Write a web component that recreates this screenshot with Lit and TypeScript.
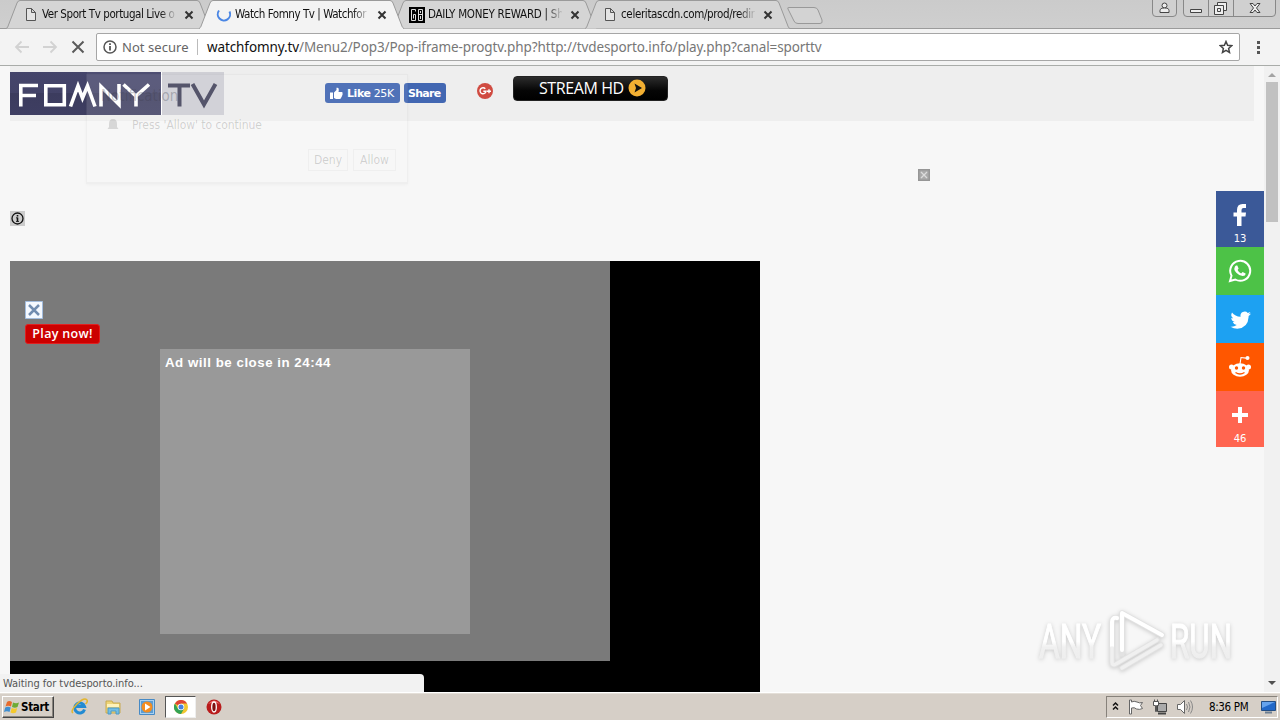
import { LitElement, html, css, svg } from "lit";
import { customElement, property } from "lit/decorators.js";

const close = html`<svg class="x" width="10" height="10" viewBox="0 0 10 10"><path d="M1.5 1.5l7 7M8.5 1.5l-7 7" stroke="#333" stroke-width="2" fill="none"/></svg>`;
const doc = html`<svg width="12" height="15" viewBox="0 0 12 15"><path d="M1.500 1.500h5l4 4v8h-9zM6.500 1.500v4h4" fill="#e4e4e4" stroke="#555"/></svg>`;
const spinner = html`<svg width="16" height="16" viewBox="0 0 16 16"><path d="M3 3.500A6.200 6.200 0 1 0 13.500 4.500" fill="none" stroke="#4a86e4" stroke-width="2"/></svg>`;
const six8 = html`<svg width="16" height="16" viewBox="0 0 16 16"><path d="M0 0h16v16H0z"/><path d="M6.500 4.500v-2h-4v11h4v-6h-2v4M9.500 2.500h4v11h-4zM9.500 7.500h4M11.500 4v2M11.500 9v3" fill="none" stroke="#ddd"/></svg>`;

@customElement("browser-tab")
class BrowserTab extends LitElement {
  @property() label = "";
  @property({ type: Boolean, reflect: true }) active = false;
  @property({ attribute: false }) icon: unknown = null;
  static styles = css`
    :host { display: grid; width: 205px; height: 29px; margin-right: -12px; flex: none; position: relative; }
    :host([active]) { z-index: 2; }
    .shape, .row { grid-area: 1 / 1; }
    .row { display: flex; align-items: center; height: 28px; padding-left: 15px; font: 11.5px "DejaVu Sans Condensed", "DejaVu Sans", sans-serif; z-index: 1; color: #111; }
    .icon { width: 20px; display: flex; justify-content: center; padding-top: 1px; margin-right: 1px; }
    .title { width: 134px; overflow: hidden; white-space: nowrap; letter-spacing: var(--ls, -0.3px); -webkit-mask-image: linear-gradient(90deg, #000 88%, transparent 101%); }
    .x { margin-left: 8px; margin-top: 2px; }
  `;
  render() {
    return html`<svg class="shape" width="205" height="29"><path d="M0 28.500L1.500 27.500L11 3Q12 .5 14 .5H191Q193 .5 194 3L203.500 27.500L205 28.500" fill=${this.active ? "#f3f3f3" : "#d5d5d5"} stroke="#9a9a9a"/>${this.active ? svg`<path d="M1 28.500H204" stroke="#f3f3f3" stroke-width="1.500"/>` : ""}</svg>
      <div class="row"><span class="icon">${this.icon}</span><span class="title">${this.label}</span>${close}</div>`;
  }
}

@customElement("app-root")
class AppRoot extends LitElement {
  static styles = css`
    * { box-sizing: border-box; }
    :host { display: flex; flex-direction: column; width: 1280px; height: 720px; overflow: hidden; position: relative; background: #f7f7f7; font-family: "DejaVu Sans Condensed", "DejaVu Sans", sans-serif; }
    svg { display: block; flex: none; }
    .strip { display: flex; height: 29px; flex: none; background: linear-gradient(#cbcbcb, #cfcfcf); border-bottom: 1px solid #9b9b9b; padding-left: 6px; }
    .t1 { --ls: -0.43px; } .t2 { --ls: -0.45px; } .t3 { --ls: -0.26px; } .t4 { --ls: -0.34px; }
    .newtab { margin-left: 9px; }
    .win { margin-left: auto; }
    .toolbar { display: flex; align-items: center; height: 37px; flex: none; background: #f3f3f3; border-bottom: 1px solid #a9aca9; padding-left: 12px; }
    .nav { display: flex; gap: 8px; }
    .url { display: flex; align-items: center; width: 1144px; height: 28px; margin-left: 8px; background: #fff; border: 1px solid #a6a6a6; border-radius: 2px; padding: 0 6px; font: 14px "Noto Sans", sans-serif; color: #777; white-space: nowrap; }
    .secure { margin-left: 5px; width: 75px; font-size: 13px; color: #666; letter-spacing: 0.05px; }
    .addr { border-left: 1px solid #bbb; padding-left: 9px; height: 16px; line-height: 16px; letter-spacing: -0.105px; flex: 1; font-size: 13.5px; }
    .addr b { font-weight: 400; color: #111; }
    .dots { margin-left: 16px; }
    .body { display: flex; height: 626px; flex: none; }
    .page { width: 1264px; padding: 0 10px; display: flex; flex-direction: column; }
    .head { height: 55px; background: #eee; display: flex; align-items: flex-start; flex: none; }
    .logo { margin-top: 6px; }
    .fb { display: flex; align-items: center; gap: 4px; margin-top: 17px; height: 20px; border-radius: 3px; background: #4267b2; color: #fff; font: 11px "DejaVu Sans", sans-serif; letter-spacing: -0.3px; padding-left: 5px; white-space: nowrap; }
    .fb b { font-size: 11px; }
    .like { width: 75px; margin-left: 101px; letter-spacing: -0.4px; }
    .share { width: 42px; margin-left: 4px; padding-left: 4px; letter-spacing: -0.7px; }
    .gp { margin: 17px 0 0 31px; }
    .stream { display: flex; align-items: center; gap: 4px; margin: 10px 0 0 20px; width: 155px; height: 25px; border-radius: 4px; background: linear-gradient(#2c2c2c, #050505 60%, #000); border: 1px solid #222; color: #fff; font: 16px/20px "Open Sans", sans-serif; padding: 0 0 1px 25px; letter-spacing: -0.4px; white-space: nowrap; }
    .adx { margin: 48px 0 0 908px; }
    .info { margin-top: 30px; }
    .player { margin-top: 35px; width: 750px; flex: 1; background: #000; }
    .ad { width: 600px; height: 400px; background: #7a7a7a; padding: 40px 15px 0; }
    .play { margin-top: 5px; width: 75px; height: 20px; background: #c00; border: 1px solid #e02020; border-radius: 3px; color: #fff; font: 600 12.5px/18px "Open Sans", sans-serif; letter-spacing: 0.3px; text-align: center; white-space: nowrap; }
    .inner { margin: 5px 0 0 135px; width: 310px; height: 285px; background: #999; color: #fff; font: bold 13.3px/16px "Liberation Sans", sans-serif; letter-spacing: 0.52px; padding: 6px 5px; }
    .scroll { width: 16px; background: #f1f1f1; display: flex; flex-direction: column; align-items: center; }
    .thumb { width: 12px; height: 140px; background: #c1c1c1; }
    .down { margin-top: auto; }
    .ghost { position: absolute; left: 86px; top: 74px; width: 322px; height: 110px; border: 1px solid rgba(0,0,0,.03); border-bottom-width: 2px; box-shadow: 0 1px 3px rgba(0,0,0,.03); background: rgba(255,255,255,.08); color: rgba(0,0,0,.17); font-size: 12px; display: flex; flex-direction: column; }
    .ghost .g1 { font-size: 15px; margin: 12px 0 0 14px; line-height: 18px; color: rgba(60,60,75,.3); }
    .g2 { display: flex; gap: 13px; margin: 13px 0 0 20px; line-height: 15px; height: 15px; letter-spacing: -0.05px; }
    .g3 { display: flex; gap: 5px; margin: 16px 11px 0 auto; line-height: 20px; }
    .g3 span { width: 43px; height: 22px; border: 1px solid rgba(0,0,0,.03); text-align: center; }
    .g3 span:first-child { width: 40px; }
    .social { position: absolute; left: 1216px; top: 191px; width: 48px; display: flex; flex-direction: column; color: #fff; font: 10px/12px "DejaVu Sans", sans-serif; text-align: center; }
    .cell { height: 48px; display: flex; flex-direction: column; align-items: center; padding-top: 12px; }
    .cell.tall { height: 56px; }
    .cell span { margin-top: 6px; }
    .f { background: #3b5998; } .w { background: #4dc247; } .t { background: #1da1f2; } .r { background: #ff5700; } .p { background: #ff6550; }
    .status { position: absolute; left: 0; top: 674px; width: 424px; height: 18px; background: #f2f2f2; border-radius: 0 4px 0 0; color: #555; font-size: 11px; line-height: 20px; padding-left: 3px; letter-spacing: -0.05px; }
    .mark { position: absolute; left: 1031px; top: 602px; filter: drop-shadow(0 1px 2px rgba(0,0,0,.18)); overflow: visible; }
    .task { display: flex; align-items: center; height: 28px; background: #d6cfc7; border-top: 1px solid #fff; box-shadow: inset 0 1px #e4dfd8; padding-left: 2px; flex: none; }
    .start { display: flex; align-items: center; gap: 1px; width: 52px; height: 22px; margin-top: 1px; border: 1px solid; border-color: #fff #444 #444 #fff; box-shadow: inset -1px -1px #8a857e; font: bold 11.5px "DejaVu Sans Condensed", "DejaVu Sans", sans-serif; letter-spacing: -0.3px; color: #000; padding-left: 1px; white-space: nowrap; }
    .quick { display: flex; align-items: center; margin-left: 17px; }
    .chrome { width: 31px; height: 22px; margin: 0 10px 0 10px; background: #fff; border: 1px solid; border-color: #555 #eee #eee #555; display: grid; place-items: center; }
    .tray { display: flex; align-items: center; width: 172px; height: 22px; margin: 1px 2px 0 auto; border: 1px solid; border-color: #87827b #fff #fff #87827b; padding-left: 5px; color: #000; }
    .clock { font-size: 11.5px; letter-spacing: -0.35px; width: 48px; white-space: nowrap; margin: 0 5px 0 13px; }
    .q2 { margin-left: 17px; } .q3 { margin-left: 18px; }
  `;
  render() {
    return html`
      <div class="strip">
        <browser-tab class="t1" label="Ver Sport Tv portugal Live o" .icon=${doc}></browser-tab>
        <browser-tab class="t2" active label="Watch Fomny Tv | Watchfor" .icon=${spinner}></browser-tab>
        <browser-tab class="t3" label="DAILY MONEY REWARD | Sh" .icon=${six8}></browser-tab>
        <browser-tab class="t4" label="celeritascdn.com/prod/redire" .icon=${doc}></browser-tab>
        <svg class="newtab" width="40" height="29"><path d="M2 7.500H27Q30 7.500 31 10L35 20Q36 23.500 33 23.500H11Q8 23.500 7 21L1 9Q0 7.500 2 7.500Z" fill="#d3d3d3" stroke="#999"/></svg>
        <svg class="win" width="132" height="18" viewBox="0 0 132 18"><g fill="#d0d0d0" stroke="#888"><path d="M4.500 0V13Q4.500 16.500 8 16.500H25Q28.500 16.500 28.500 13V0M35.500 0V13Q35.500 16.500 39 16.500H124Q127.500 16.500 127.500 13V0M60.500 0V16M85.500 0V16"/></g>
          <g fill="#eee" stroke="#444"><circle cx="16.500" cy="5.500" r="2.500"/><path d="M12 12.500V10.500Q12 8 16.500 8T21 10.500V12.500ZM42.500 9.500h11v3h-11z"/><path d="M69.500 2.500h9v8h-9z"/><path d="M66.500 5.500h9v9h-9zM69.500 8.500h3v3h-3z"/><path d="M102 3.500h3l2 2.500 2-2.500h3l-3.500 4.500 3.500 4.500h-3l-2-2.500-2 2.500h-3l3.500-4.500z"/></g></svg>
      </div>
      <div class="toolbar">
        <div class="nav">
          <svg width="20" height="20" viewBox="0 0 20 20"><path d="M17 10H4M9.500 4.500L4 10l5.500 5.500" fill="none" stroke="#d2d2d2" stroke-width="1.800"/></svg>
          <svg width="20" height="20" viewBox="0 0 20 20"><path d="M3 10h13M10.500 4.500L16 10l-5.500 5.500" fill="none" stroke="#d2d2d2" stroke-width="1.800"/></svg>
          <svg width="20" height="20" viewBox="0 0 20 20"><path d="M4.500 4.500l11 11m0-11l-11 11" stroke="#5a5a5a" stroke-width="2"/></svg>
        </div>
        <div class="url">
          <svg width="14" height="14" viewBox="0 0 14 14"><circle cx="7" cy="7" r="6" fill="none" stroke="#555" stroke-width="1.500"/><path d="M7 6v4.500M7 3.300v1.700" stroke="#555" stroke-width="1.800"/></svg>
          <span class="secure">Not secure</span>
          <span class="addr"><b>watchfomny.tv</b>/Menu2/Pop3/Pop-iframe-progtv.php?http://tvdesporto.info/play.php?canal=sporttv</span>
          <svg width="14" height="14" viewBox="0 0 14 14"><path d="M7 1.500l1.600 3.800 4 .4-3 2.700.9 4L7 10.300l-3.500 2.100.9-4-3-2.700 4-.4z" fill="none" stroke="#444" stroke-width="1.500"/></svg>
        </div>
        <svg class="dots" width="5" height="14"><path d="M1 1h3v3H1zM1 6h3v3H1zM1 11h3v3H1z" fill="#555"/></svg>
      </div>
      <div class="body">
        <div class="page">
          <div class="head">
            <svg class="logo" width="214" height="43" viewBox="0 0 214 43"><defs><linearGradient id="lg" x2="0" y2="1"><stop stop-color="#45456b"/><stop offset=".5" stop-color="#434368"/><stop offset=".5" stop-color="#3c3c5e"/><stop offset="1" stop-color="#3e3e62"/></linearGradient></defs>
              <path d="M0 0h151v43H0z" fill="url(#lg)"/><path d="M77 0h74v43H77z" fill="#fff" opacity=".06"/><path d="M151 0h1v43h-1z" fill="#fff"/><path d="M152 0h62v43h-62z" fill="#cfcfd5"/>
              <path d="M10.800 34.500V13.500H28M10.800 23.500H26M35.800 13.800h18.500v19h-18.500zM60.500 34.500L68 14l4.500 12L77.500 14 85 34.500M91 34.500V14.500L109 32.500V12M113.500 12.500l12.500 11.500L139 12.500M126 23v11.500" fill="none" stroke="#fff" stroke-width="3.600"/>
              <path d="M158 13.500h22M169.500 13.500V34.500M182.500 12l11.500 20.500L205.500 12" fill="none" stroke="#47475f" stroke-width="4"/></svg>
            <div class="fb like"><svg width="13" height="13" viewBox="0 0 13 13"><path d="M0 5.500h3V12H0zM4 5.500L6.500 3V.8Q9 0 8.800 3L8.500 5H12q1 .5.500 1.500.5 1-.3 1.600.2 1-.5 1.500 0 1-.700 1.200Q11 12 9.500 12H6L4 11z" fill="#fff"/></svg><span><b>Like</b> 25K</span></div>
            <div class="fb share"><b>Share</b></div>
            <svg class="gp" width="16" height="16" viewBox="0 0 16 16"><circle cx="8" cy="8" r="8" fill="#d04b41"/><path d="M8.300 5.800A3 3 0 1 0 9 8.300H6.300M12 6.200v4M10 8.200h4" fill="none" stroke="#fff" stroke-width="1.400"/></svg>
            <div class="stream">STREAM HD<svg width="18" height="18" viewBox="0 0 18 18"><circle cx="9" cy="9" r="8.500" fill="#f2af32"/><path d="M6.500 4.500L14 9l-7.500 4.500L8 9z" fill="#111"/></svg></div>
          </div>
          <svg class="adx" width="12" height="12" viewBox="0 0 12 12"><path d="M0 0h12v12H0z" fill="#969696"/><path d="M1.500 1.500h9v9h-9z" fill="#aaa"/><path d="M3 3l6 6M9 3L3 9" stroke="#dcdcdc" stroke-width="1.300"/></svg>
          <svg class="info" width="15" height="15" viewBox="0 0 15 15"><path d="M0 0h15v15H0z" fill="#ccc"/><circle cx="7.500" cy="7.500" r="5.500" fill="none" stroke="#111" stroke-width="1.300"/><path d="M7.500 6.500V10.500M7.500 4v1.500" stroke="#111" stroke-width="1.600"/><path d="M6 6.800h1.500M6 10.500h3" stroke="#111" stroke-width=".8"/></svg>
          <div class="player"><div class="ad">
            <svg width="18" height="18" viewBox="0 0 18 18"><path d="M.5.5h17v17H.5z" fill="#f5f9ff" stroke="#a3bdde"/><path d="M4 4l10 10M14 4L4 14" stroke="#728db0" stroke-width="2.500"/></svg>
            <div class="play">Play now!</div>
            <div class="inner">Ad will be close in 24:44</div>
          </div></div>
        </div>
        <div class="scroll"><svg width="16" height="16"><path d="M4 11l4-4 4 4z" fill="#a3a3a3"/></svg><div class="thumb"></div><svg class="down" width="16" height="16"><path d="M4 5h8l-4 4z" fill="#505050"/></svg></div>
      </div>
      <div class="task">
        <div class="start"><svg width="16" height="16" viewBox="0 0 16 16"><path d="M3 3Q5 1 8 3L7 7.500Q4 6 1.500 7.500z" fill="#e66a2c"/><path d="M9 3.500q3 1.500 6 0L13.500 8Q11 9.500 8 8z" fill="#6eab35"/><path d="M1.200 8.500Q4 7 6.700 8.500L5.500 13Q3 11.500 0 13z" fill="#3f8ed0"/><path d="M7.700 9q3 1.500 5.500 0L12 13.500q-3 1.500-5.500 0z" fill="#f5c92c"/></svg>Start</div>
        <div class="quick">
          <svg width="17" height="17" viewBox="0 0 17 17"><path d="M13.500 11.500A5 5 0 1 1 13.500 8.500H5" fill="none" stroke="#238bd2" stroke-width="3"/><path d="M2 15Q-1 13 6 6T16 2Q17 4 14.500 6" fill="none" stroke="#e4b62f" stroke-width="1.500"/></svg>
          <svg class="q2" width="16" height="16" viewBox="0 0 16 16"><path d="M1 2h6l1 2h7v10H1z" fill="#eed477" stroke="#c8aa50"/><path d="M2 5h12v3H2z" fill="#fff2ba"/><path d="M3 15V9h11v6h-3v-3H6v3z" fill="#72bde5" stroke="#4b9ac8"/></svg>
          <svg class="q3" width="16" height="16" viewBox="0 0 16 16"><path d="M.5.5h15v15H.5z" fill="#a8d0f0" stroke="#478ac5"/><path d="M2 2h12v12H2z" fill="#5b9dd4"/><circle cx="8" cy="8" r="5.500" fill="#f38d20"/><path d="M6 4.500L11.500 8 6 11.500z" fill="#fff"/></svg>
          <div class="chrome"><svg width="14" height="14" viewBox="0 0 14 14"><circle cx="7" cy="7" r="7" fill="#f1c630"/><path d="M7 7L.9 3.500A7 7 0 0 1 13.100 3.500H7z" fill="#df4434"/><path d="M.9 3.500A7 7 0 0 0 7 14L10 8.700 7 7 4 8.700z" fill="#33a355"/><circle cx="7" cy="7" r="3.300" fill="#fff"/><circle cx="7" cy="7" r="2.500" fill="#4580df"/></svg></div>
          <svg width="16" height="16" viewBox="0 0 16 16"><circle cx="8" cy="8" r="7.500" fill="#b91c1c"/><path d="M2 5Q8-2 14 5 8 2 2 5" fill="#e66"/><ellipse cx="8" cy="8" rx="2.300" ry="5" fill="#7e0f0f" stroke="#fff" stroke-width="1.300"/></svg>
        </div>
        <div class="tray">
          <svg width="84" height="20" viewBox="0 0 84 20"><path d="M1 8.500l2.500-2.500L6 8.500M1 12.500l2.500-2.500L6 12.500" fill="none" stroke="#111" stroke-width="1.500"/><path d="M17.500 3v14h2v-6q3-1 5 1 3 1 6-.500l-2-3 2-3q-3 1-5.500-.500-3-1.500-5.500 0V3z" fill="#fff" stroke="#666"/><path d="M45.500 6.500h9v8h-9z" fill="#aaa" stroke="#444"/><path d="M46 16.500h8" stroke="#444" stroke-width="2"/><path d="M41.500 4.500h5v4h-2v6h-1v-6h-2zM42.500 2.500v2M45.500 2.500v2" fill="#fff" stroke="#555"/><path d="M65.500 7.500h3l4-4v13l-4-4h-3z" fill="#fff" stroke="#666"/><path d="M74.500 7q2 3 0 6M76.500 5q3 5 0 10M78.500 3.500q4 6.500 0 13" fill="none" stroke="#888"/></svg>
          <span class="clock">8:36 PM</span>
          <svg width="17" height="16" viewBox="0 0 17 16"><path d="M1.500 2.500h14v9h-14z" fill="#2268c8" stroke="#244e84"/><path d="M2 3h13L2 9z" fill="#66a3ed"/><path d="M5 13.500h7" stroke="#6c7e92" stroke-width="2"/></svg>
        </div>
      </div>
      <div class="ghost"><div class="g1">Notification</div><div class="g2"><svg width="12" height="13"><path d="M2 9V6Q2 1 6 1t4 5v3l1.500 2h-11zM4 12h4" fill="rgba(0,0,0,.13)"/></svg>Press 'Allow' to continue</div><div class="g3"><span>Deny</span><span>Allow</span></div></div>
      <div class="social">
        <div class="cell tall f"><svg width="24" height="24" viewBox="0 0 24 24"><path d="M9 23V13.500H5.500V9.500H9V7q0-6 5.500-6H18v4h-2.500Q13.500 5 13.500 7v2.500H18l-.5 4h-4V23z" fill="#fff"/></svg><span>13</span></div>
        <div class="cell w"><svg width="24" height="24" viewBox="0 0 24 24"><path d="M2 22l1.500-5.300A10 10 0 1 1 7.300 20.500z" fill="none" stroke="#fff" stroke-width="2"/><path d="M8 6.500l1.300 0 1.300 3-1 1.500q1 2.200 3.500 3.500l1.500-1.500 3 1.500q0 2.500-3 2.500-3 0-6-3T6.500 9q.2-1.600 1.500-2.500z" fill="#fff"/></svg></div>
        <div class="cell t"><svg width="24" height="24" viewBox="0 0 24 24"><path d="M23 5.500q-1 .5-2.400.7 1.300-.8 1.800-2.200-1.200.7-2.600 1a4.200 4.200 0 0 0-7.200 3.800Q7 8.500 4 4.500q-2 3.500 1.200 5.800-1 0-1.900-.6 0 3.300 3.400 4.200-.9.300-1.900.1.900 2.800 3.900 3-2.700 2.100-6.200 1.700 3.200 2 6.800 2Q20 20 20.600 9v-1q1.400-1 2.400-2.500z" fill="#fff" transform="translate(0 1)"/></svg></div>
        <div class="cell r"><svg width="24" height="24" viewBox="0 0 24 24"><g fill="#fff"><ellipse cx="12" cy="15" rx="9" ry="6.800"/><circle cx="3.500" cy="12" r="2.500"/><circle cx="20.500" cy="12" r="2.500"/><circle cx="19.500" cy="3" r="2"/></g><path d="M12 9l1-6.500 5 .6" fill="none" stroke="#fff" stroke-width="1.100"/><g fill="#ff5700"><circle cx="8.500" cy="13" r="1.700"/><circle cx="15.500" cy="13" r="1.700"/></g><path d="M7.500 17.500q4.500 3 9 0" fill="none" stroke="#ff5700" stroke-width="1.300"/></svg></div>
        <div class="cell tall p"><svg width="24" height="24" viewBox="0 0 24 24"><path d="M10 4h4v6h6v4h-6v6h-4v-6H4v-4h6z" fill="#fff"/></svg><span>46</span></div>
      </div>
      <div class="status">Waiting for tvdesporto.info...</div>
      <svg class="mark" width="212" height="76" viewBox="0 0 212 76"><defs><linearGradient id="fade" x2="0" y2="1"><stop offset=".5" stop-color="#fff"/><stop offset=".6" stop-color="#f0f0f0"/><stop offset="1" stop-color="#ececec"/></linearGradient></defs>
        <g fill="url(#fade)" stroke="url(#fade)" stroke-width="1" font-family="Roboto, sans-serif" font-size="48"><text x="8" y="56" textLength="62" lengthAdjust="spacingAndGlyphs">ANY</text><text x="139" y="56" textLength="62" lengthAdjust="spacingAndGlyphs">RUN</text></g>
        <g fill="none" stroke-linejoin="round" stroke-linecap="round"><path d="M86 16Q81 15 81 20V60Q81 64 85 62L126 38M91 52V11L131 33M91 52V26M91 66L130 43" stroke="#e2e2e2" stroke-width="5.500"/><path d="M91 48V11L131 33M86 16Q81 15 81 20V44" stroke="#fff" stroke-width="4"/><path d="M81 46V60Q81 64 85 62L126 38M91 66L130 43" stroke="#f0f0f0" stroke-width="3.500"/></g></svg>
    `;
  }
}
